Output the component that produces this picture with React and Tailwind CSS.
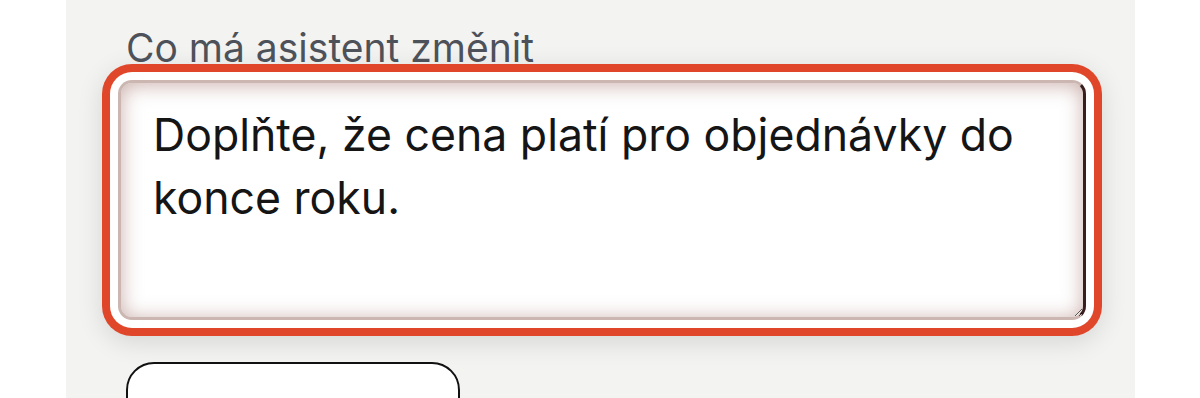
import { useState } from "react";

export default function App() {
  const [text, setText] = useState(
    "Doplňte, že cena platí pro objednávky do konce roku."
  );

  return (
    <div className="h-[398px] overflow-hidden bg-white font-['Inter',sans-serif]">
      <div className="ml-[66px] w-[1069px] h-[420px] bg-[#f3f3f2] pl-[52px] pr-[49px] pt-[24px]">
        <label className="block pl-2 text-[39px] leading-[47px] text-[#4d5159] mb-[9px]">
          Co má asistent změnit
        </label>

        <textarea
          value={text}
          onChange={(e) => setText(e.target.value)}
          className="block w-[968px] h-[240px] rounded-[14px] border-[3px] border-[#cbb6b1] border-r-[#3a1d1d] bg-white px-[32px] pt-[21px] text-[44.6px] leading-[63px] text-[#151515] outline-none shadow-[0_0_0_8px_#fff,0_0_0_16px_#e0462a,0_6px_26px_16px_rgba(0,0,0,0.12),inset_0_2px_20px_rgba(150,95,85,0.5)]"
        />

        <button className="mt-[42px] ml-2 w-[334px] h-[64px] rounded-[28px] border-2 border-[#111] bg-white" />
      </div>
    </div>
  );
}
